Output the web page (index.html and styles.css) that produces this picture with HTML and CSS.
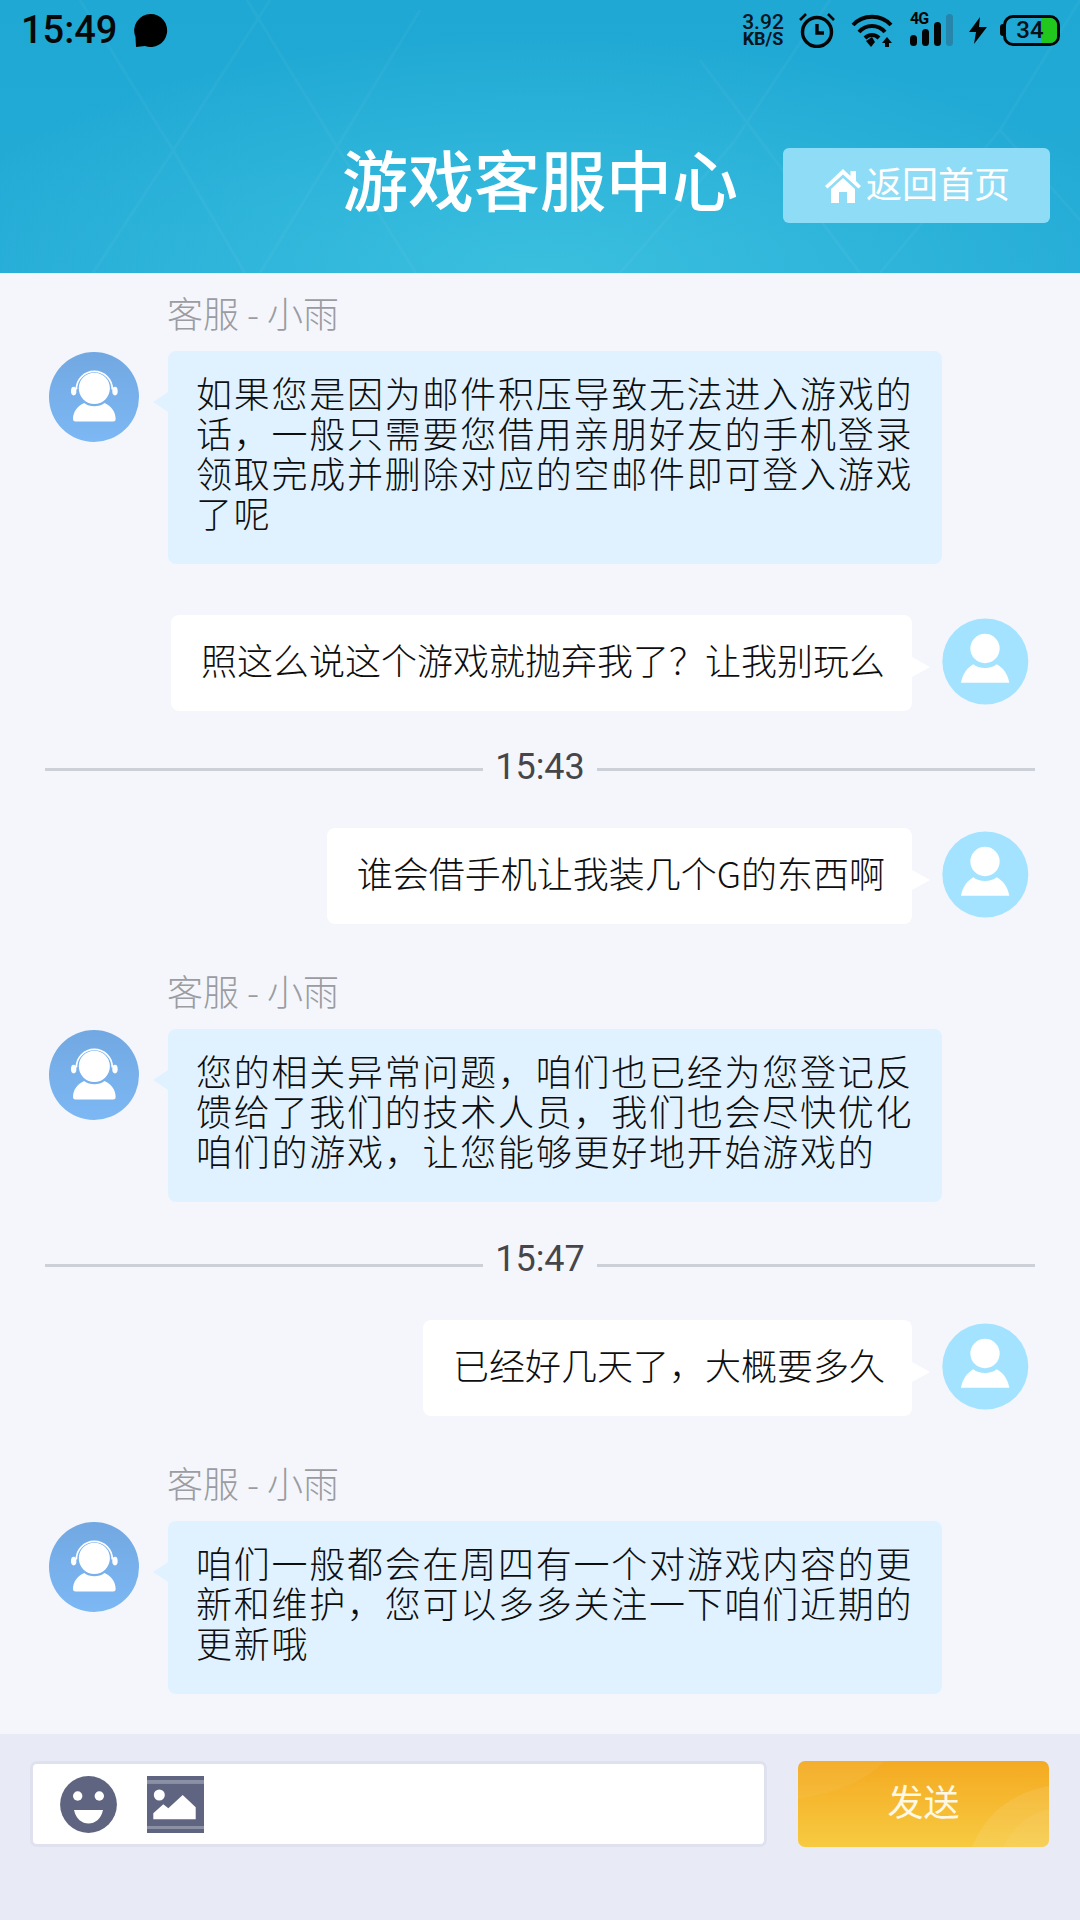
FILE: index.html
```html
<!DOCTYPE html>
<html lang="zh-CN">
<head>
<meta charset="utf-8">
<title>游戏客服中心</title>
<link rel="stylesheet" href="styles.css">
</head>
<body>
<div class="page">
  <header class="header">
    <svg class="header-lines" viewBox="0 0 1080 273" width="1080" height="273">
      <path d="M80 0L173 150L245 273M247 0L337 147L416 273M93 273L180 140L270 0M260 273L337 147L420 10M733 143L800 43L830 0M620 273L733 143M700 60L860 273M1000 130L1080 0M880 273L1000 130L1080 220" />
    </svg>
    <div class="status">
      <div class="status-left">
        <span class="clock">15:49</span>
        <svg class="msg-dot" viewBox="0 0 35 35" width="35" height="35"><path d="M17.500 1A16.500 16.500 0 1 1 12 33L3 34L2.500 24A16.500 16.500 0 0 1 17.500 1Z"/></svg>
      </div>
      <div class="status-right">
        <div class="speed"><span class="speed-num">3.92</span><span class="speed-unit">KB/S</span></div>
        <svg class="alarm" viewBox="0 0 36 36" width="36" height="36"><circle cx="18" cy="20" r="14.500" fill="none" stroke="#050505" stroke-width="3.400"/><path d="M18 12V21H25" fill="none" stroke="#050505" stroke-width="3.400"/><path d="M1 8L7 2M35 8L29 2" stroke="#050505" stroke-width="2.600" fill="none"/></svg>
        <svg class="wifi" viewBox="0 0 42 34" width="42" height="34"><path d="M2 12C12 1 30 1 40 12M8 19C15 11 27 11 34 19M14 25C18 21 24 21 28 25" fill="none" stroke="#050505" stroke-width="4"/><path d="M15 28L21 24L24 29L20 34Z"/><path d="M36 24L41 30H38V34H34V30H31Z"/></svg>
        <div class="signal">
          <span class="signal-tag">4G</span>
          <span class="bar bar-1"></span><span class="bar bar-2"></span><span class="bar bar-3"></span><span class="bar bar-4"></span>
        </div>
        <svg class="bolt" viewBox="0 0 18 27" width="18" height="27"><path d="M11 0L0 15H7L5 27L18 10H10Z"/></svg>
        <span class="battery-nub"></span>
        <div class="battery"><span class="battery-fill"></span><span class="battery-num">34</span></div>
      </div>
    </div>
    <h1 class="title">游戏客服中心</h1>
    <a class="home-btn">
      <svg viewBox="0 0 36 35" width="36" height="35"><path d="M0 18L18 1L25.500 8V3H31V13L36 18L33.500 20.500L18 6.500L2.500 20.500Z"/><path d="M6 21L18 10L30 21V35H22V24H14V35H6Z"/></svg>
      <span>返回首页</span>
    </a>
  </header>

  <main class="chat">
    <section class="agent">
      <div class="agent-name">客服 - 小雨</div>
      <div class="agent-row">
        <div class="avatar-agent"><svg viewBox="0 0 266 265" width="90" height="90"><path d="M71 198C71 175 84 160 104 150C120 163 148 163 164 150C184 160 197 175 197 198Q197 205 190 205H78Q71 205 71 198Z" fill="#fff"/><circle cx="134" cy="107" r="48" fill="#fff" stroke="#79b0ec" stroke-width="4"/><path d="M81 110A53 53 0 1 1 187 110" fill="none" stroke="#fff" stroke-width="5"/><ellipse cx="73" cy="115" rx="8" ry="13" fill="#fff"/><ellipse cx="195" cy="115" rx="8" ry="13" fill="#fff"/></svg></div>
        <div class="bubble bubble-agent">如果您是因为邮件积压导致无法进入游戏的话，一般只需要您借用亲朋好友的手机登录领取完成并删除对应的空邮件即可登入游戏了呢</div>
      </div>
    </section>

    <section class="user gap-a">
      <div class="bubble bubble-user">照这么说这个游戏就抛弃我了？让我别玩么</div>
      <svg class="avatar-user" viewBox="0 0 261 258" width="87" height="87"><circle cx="130" cy="129" r="129" fill="#a3e3ff"/><circle cx="129" cy="90" r="44" fill="#fff"/><path d="M57 193C62 165 75 148 94 137C112 152 146 152 164 137C184 148 197 165 202 193Z" fill="#fff"/></svg>
    </section>

    <div class="divider first-divider"><span>15:43</span></div>

    <section class="user after-divider">
      <div class="bubble bubble-user">谁会借手机让我装几个G的东西啊</div>
      <svg class="avatar-user" viewBox="0 0 261 258" width="87" height="87"><circle cx="130" cy="129" r="129" fill="#a3e3ff"/><circle cx="129" cy="90" r="44" fill="#fff"/><path d="M57 193C62 165 75 148 94 137C112 152 146 152 164 137C184 148 197 165 202 193Z" fill="#fff"/></svg>
    </section>

    <section class="agent gap-b">
      <div class="agent-name">客服 - 小雨</div>
      <div class="agent-row">
        <div class="avatar-agent"><svg viewBox="0 0 266 265" width="90" height="90"><path d="M71 198C71 175 84 160 104 150C120 163 148 163 164 150C184 160 197 175 197 198Q197 205 190 205H78Q71 205 71 198Z" fill="#fff"/><circle cx="134" cy="107" r="48" fill="#fff" stroke="#79b0ec" stroke-width="4"/><path d="M81 110A53 53 0 1 1 187 110" fill="none" stroke="#fff" stroke-width="5"/><ellipse cx="73" cy="115" rx="8" ry="13" fill="#fff"/><ellipse cx="195" cy="115" rx="8" ry="13" fill="#fff"/></svg></div>
        <div class="bubble bubble-agent">您的相关异常问题，咱们也已经为您登记反馈给了我们的技术人员，我们也会尽快优化咱们的游戏，让您能够更好地开始游戏的</div>
      </div>
    </section>

    <div class="divider second-divider"><span>15:47</span></div>

    <section class="user after-divider-b">
      <div class="bubble bubble-user">已经好几天了，大概要多久</div>
      <svg class="avatar-user" viewBox="0 0 261 258" width="87" height="87"><circle cx="130" cy="129" r="129" fill="#a3e3ff"/><circle cx="129" cy="90" r="44" fill="#fff"/><path d="M57 193C62 165 75 148 94 137C112 152 146 152 164 137C184 148 197 165 202 193Z" fill="#fff"/></svg>
    </section>

    <section class="agent gap-b">
      <div class="agent-name">客服 - 小雨</div>
      <div class="agent-row">
        <div class="avatar-agent"><svg viewBox="0 0 266 265" width="90" height="90"><path d="M71 198C71 175 84 160 104 150C120 163 148 163 164 150C184 160 197 175 197 198Q197 205 190 205H78Q71 205 71 198Z" fill="#fff"/><circle cx="134" cy="107" r="48" fill="#fff" stroke="#79b0ec" stroke-width="4"/><path d="M81 110A53 53 0 1 1 187 110" fill="none" stroke="#fff" stroke-width="5"/><ellipse cx="73" cy="115" rx="8" ry="13" fill="#fff"/><ellipse cx="195" cy="115" rx="8" ry="13" fill="#fff"/></svg></div>
        <div class="bubble bubble-agent">咱们一般都会在周四有一个对游戏内容的更新和维护，您可以多多关注一下咱们近期的更新哦</div>
      </div>
    </section>
  </main>

  <footer class="footer">
    <div class="input-box">
      <svg viewBox="0 0 57 57" width="57" height="57"><circle cx="28.500" cy="28.500" r="28.400" fill="#5f6580"/><circle cx="17.700" cy="20" r="4.700" fill="#fff"/><circle cx="39.300" cy="20" r="4.700" fill="#fff"/><path d="M14 34H43C41 43 35 47.500 28.500 47.500C22 47.500 16 43 14 34Z" fill="#fff"/></svg>
      <svg viewBox="0 0 57 57" width="57" height="57"><path d="M0 0H57V4H0ZM0 7.300H57V50H0ZM0 53H57V57H0Z" fill="#5f6580"/><path d="M0 4H57V7.300H0ZM0 50H57V53H0Z" fill="#8c90a5"/><circle cx="12.300" cy="19" r="5.500" fill="#fff"/><path d="M6.300 43.300V37.300L16.300 28.300L21.300 32.300L35.700 19L48.700 31.300V43.300Z" fill="#fff"/></svg>
    </div>
    <button class="send">
      <svg class="send-art" viewBox="0 0 251 86" width="251" height="86"><path d="M0 0H87Q60 28 0 38Z" fill="#fff" opacity=".05"/><path d="M174 86Q195 35 251 25V86Z" fill="#fff" opacity=".09"/><path d="M205 86Q220 55 251 48V86Z" fill="#fff" opacity=".05"/></svg>
      <span>发送</span>
    </button>
  </footer>
</div>
</body>
</html>
```

FILE: styles.css
```css
* { box-sizing: border-box; }
html, body { margin: 0; padding: 0; }
body {
  width: 1080px;
  height: 1920px;
  overflow: hidden;
  font-family: "Noto Sans CJK SC", "Noto Sans", sans-serif;
  font-weight: 300;
}
.page {
  width: 1080px;
  height: 1920px;
  display: flex;
  flex-direction: column;
  background: #f4f6fc;
}

/* header */
.header {
  position: relative;
  flex: none;
  height: 273px;
  background:
    radial-gradient(ellipse 620px 240px at 50% 100%, #3abfde 0%, rgba(58,191,222,0) 100%),
    linear-gradient(180deg, #1fa8d4 0%, #25acd7 100%);
  overflow: hidden;
}
.header-lines {
  position: absolute;
  left: 0;
  top: 0;
}
.header-lines path {
  fill: none;
  stroke: #fff;
  stroke-opacity: .035;
  stroke-width: 3;
}
.status {
  position: relative;
  height: 60px;
  display: flex;
  justify-content: space-between;
  align-items: center;
  padding: 0 20px 0 21px;
}
.status-left, .status-right {
  display: flex;
  align-items: center;
}
.status-left { gap: 16px; }
.clock {
  font: 500 38px/60px Roboto, sans-serif;
  color: #080808;
}
.msg-dot { fill: #000; }
.status-right svg { fill: #050505; flex: none; }
.speed {
  width: 42px;
  display: flex;
  flex-direction: column;
  align-items: center;
  font-family: Roboto, sans-serif;
  color: #08151c;
  margin-right: 15px;
}
.speed-num { font-size: 21px; font-weight: 500; line-height: 17px; }
.speed-unit { font-size: 18px; font-weight: 700; line-height: 16px; }
.alarm { margin-right: 16px; }
.wifi { margin-right: 17px; }
.signal {
  position: relative;
  width: 43px;
  height: 32px;
  margin-right: 16px;
}
.signal-tag {
  position: absolute;
  left: 0;
  top: -3px;
  font: 700 16px/15px Roboto, sans-serif;
  letter-spacing: -1px;
  color: #050505;
}
.bar {
  position: absolute;
  bottom: 0;
  width: 7px;
  border-radius: 4px;
  background: #050505;
}
.bar-1 { left: 0; height: 11px; }
.bar-2 { left: 12px; height: 17px; }
.bar-3 { left: 24px; height: 24px; }
.bar-4 { left: 36px; height: 32px; background: #2585ab; }
.bolt { margin-right: 13px; }
.battery-nub {
  width: 3px;
  height: 12px;
  border-radius: 3px 0 0 3px;
  background: #050505;
}
.battery {
  position: relative;
  width: 57px;
  height: 31px;
  border: 3px solid #050505;
  border-radius: 10px;
  overflow: hidden;
  text-align: center;
}
.battery-fill {
  position: absolute;
  right: 0;
  top: 0;
  bottom: 0;
  width: 16px;
  background: #22c71e;
}
.battery-num {
  position: relative;
  display: block;
  padding-right: 3px;
  font: 500 24px/25px Roboto, sans-serif;
  color: #071015;
}
.title {
  margin: 79px 0 0;
  position: relative;
  text-align: center;
  font-size: 66px;
  line-height: 76px;
  font-weight: 500;
  color: #fff;
}
.home-btn {
  position: absolute;
  left: 783px;
  top: 148px;
  width: 267px;
  height: 75px;
  display: flex;
  align-items: center;
  padding: 0 0 7px 42px;
  gap: 5px;
  border-radius: 6px;
  background: #8fdcf7;
  color: #fff;
  font-size: 36px;
  font-weight: 400;
}
.home-btn svg { fill: #fff; flex: none; margin-top: 7px; }

/* chat */
.chat {
  flex: 1;
  padding-top: 19px;
}
.agent-name {
  padding-left: 167px;
  font-size: 36px;
  line-height: 40px;
  color: #9a9ca1;
  margin-bottom: 19px;
}
.agent-row {
  display: flex;
  align-items: flex-start;
  padding-left: 49px;
  gap: 29px;
}
.avatar-agent {
  flex: none;
  width: 90px;
  height: 90px;
  margin-top: 1px;
  border-radius: 50%;
  background: linear-gradient(180deg, #72a8e2 0%, #7cb8f4 100%);
}
.avatar-agent svg { display: block; }
.bubble {
  position: relative;
  font-size: 36px;
  line-height: 40px;
  color: #0e0e0e;
  border-radius: 8px;
}
.bubble::after {
  content: "";
  position: absolute;
  border-style: solid;
  border-color: transparent;
}
.bubble-agent {
  width: 774px;
  padding: 21px 24px 32px 28px;
  letter-spacing: 1.750px;
  background: #e0f2ff;
}
.bubble-agent::after {
  left: -15px;
  top: 41px;
  border-width: 10px 15px 10px 0;
  border-right-color: #e0f2ff;
}
.user {
  display: flex;
  justify-content: flex-end;
  align-items: flex-start;
  padding-right: 51px;
  gap: 30px;
}
.avatar-user { flex: none; margin-top: 3px; }
.bubble-user {
  padding: 24px 27px 32px 30px;
  background: #fff;
}
.bubble-user::after {
  right: -18px;
  top: 42px;
  border-width: 10px 0 10px 18px;
  border-left-color: #fff;
}
.gap-a { margin-top: 51px; }
.gap-b { margin-top: 46px; }
.after-divider { margin-top: 39px; }
.after-divider-b { margin-top: 35px; }
.divider {
  display: flex;
  align-items: center;
  margin: 43px 45px 0;
  height: 40px;
  font: 400 36px/40px Roboto, sans-serif;
  color: #46464a;
}
.first-divider { margin-top: 38px; }
.divider::before, .divider::after {
  content: "";
  flex: 1;
  height: 3px;
  background: #ced0d8;
}
.divider span { padding: 0 12px; }
.first-divider span { margin-bottom: 4px; }
.second-divider span { margin-bottom: 12px; }

/* footer */
.footer {
  flex: none;
  height: 186px;
  background: #e8eaf6;
  display: flex;
  align-items: flex-start;
  padding: 27px 31px 0 30px;
  gap: 31px;
}
.input-box {
  width: 737px;
  height: 86px;
  display: flex;
  align-items: center;
  gap: 30px;
  padding-left: 27px;
  background: #fff;
  border: 3px solid #dfe2ee;
  border-radius: 7px;
}
.send {
  position: relative;
  width: 251px;
  height: 86px;
  padding: 0 0 8px;
  border: 0;
  border-radius: 7px;
  overflow: hidden;
  background: linear-gradient(180deg, #f4aa22 0%, #f7ca40 100%);
  color: #fff8e4;
  font-family: inherit;
  font-weight: 400;
  font-size: 36px;
  line-height: 78px;
}
.send-art { position: absolute; left: 0; top: 0; }
.send span { position: relative; }
```
